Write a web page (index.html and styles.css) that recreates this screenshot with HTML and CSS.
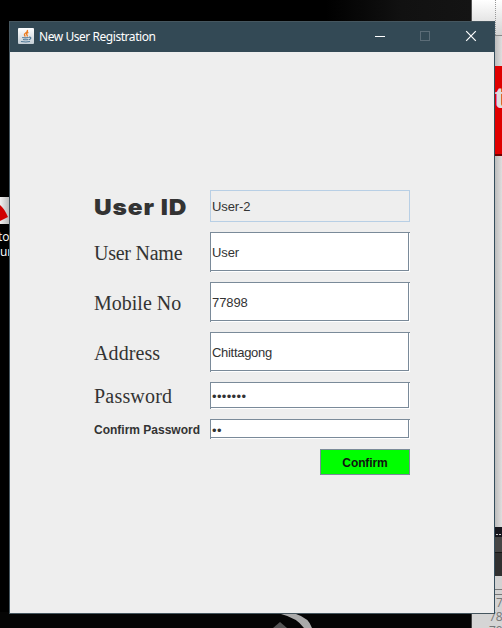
FILE: index.html
```html
<!DOCTYPE html>
<html lang="en">
<head>
<meta charset="utf-8">
<title>New User Registration</title>
<link rel="stylesheet" href="styles.css">
</head>
<body>
<div class="desktop">
  <svg class="wallpaper" width="502" height="628" aria-hidden="true">
    <defs>
      <linearGradient id="dark" x1="0" x2="1"><stop offset="0" stop-color="#000"/><stop offset=".69" stop-color="#000"/><stop offset=".85" stop-color="#111"/><stop offset="1" stop-color="#141414"/></linearGradient>
      <linearGradient id="page" x1="0" x2="0" y1="0" y2="1"><stop offset="0" stop-color="#fff"/><stop offset="1" stop-color="#d2d2d2"/></linearGradient>
      <linearGradient id="side" x1="0" x2="1"><stop offset="0" stop-color="#bcbcbc"/><stop offset="1" stop-color="#dedede"/></linearGradient>
      <linearGradient id="tile" x1="0" x2="1"><stop offset="0" stop-color="#f0f0f0"/><stop offset="1" stop-color="#bbb"/></linearGradient>
    </defs>
    <rect width="472" height="22" fill="url(#dark)"/>
    <rect y="612" width="472" height="16" fill="#050505"/>
    <path d="M281 614h15q13 4 16 14h-8q-7-10-23-14z" fill="#aaa"/>
    <path d="M273 628l7-6 7 6z" fill="#555"/>
    <rect x="471" width="1" height="22" fill="#555"/>
    <rect x="472" width="30" height="36" fill="url(#page)"/>
    <path d="M495.5 0v35" stroke="#999" stroke-dasharray="1 1"/>
    <rect x="495" y="35" width="7" height="1" fill="#888"/>
    <rect x="495" y="36" width="7" height="492" fill="url(#side)"/>
    <rect x="495" y="66" width="7" height="90" fill="#df0000"/>
    <rect x="495" y="154" width="7" height="2" fill="#720000"/>
    <rect x="495" y="527" width="7" height="10" fill="#16161d"/>
    <path d="M496 534.5h6" stroke="#ccc" stroke-dasharray="2 1"/>
    <rect x="495" y="537" width="7" height="15" fill="#454545"/>
    <rect x="495" y="552" width="7" height="1" fill="#161616"/>
    <rect x="495" y="553" width="7" height="23" fill="#303030"/>
    <rect x="495" y="576" width="7" height="52" fill="#d2d2d2"/>
    <path d="M495 589.5h7M495 594.5h7" stroke="#777"/>
    <rect x="471" y="614" width="1" height="14" fill="#444"/>
    <rect x="472" y="614" width="30" height="14" fill="#d5d5d5"/>
    <rect y="197" width="9" height="27" fill="url(#tile)"/>
    <path d="M0 205q4 3 8 12l-8 4z" fill="#d00000"/>
  </svg>
  <span class="behind shortcut-a">to</span>
  <span class="behind shortcut-b">ur</span>
  <span class="behind banner">t</span>
  <span class="behind line-a">7</span>
  <span class="behind line-b">78</span>
  <span class="behind line-c">79</span>

  <main class="window">
    <header class="titlebar">
      <svg class="java" width="16" height="16" viewBox="0 0 16 16" aria-hidden="true">
        <defs><linearGradient id="ic" x1="0" x2="0" y1="0" y2="1"><stop offset="0" stop-color="#fff"/><stop offset="1" stop-color="#c5ced5"/></linearGradient></defs>
        <rect width="16" height="16" rx="1" fill="url(#ic)"/>
        <path d="M9.300 2q.8 1.500-1.600 3-2.400 1.500-.3 3.500M10.400 4.300q-2.800 1.200-1.500 2.500.8.8 0 1.700" fill="none" stroke="#ed7d20" stroke-width="1.300"/>
        <path d="M4.200 9.500q3 .7 6.500 0M5 11.500q3 .6 5.300 0M3 13.500q5 .9 9 0M11 9.200q2.800-.3 1.400 1.700l-1.400.8" fill="none" stroke="#4f7896" stroke-width="1.100"/>
      </svg>
      <h1 class="title">New User Registration</h1>
      <svg class="controls" width="137" height="29" viewBox="0 0 137 29" aria-hidden="true">
        <path d="M18 14.500h10" stroke="#fff"/>
        <rect x="63.500" y="9.500" width="9" height="9" fill="none" stroke="#5b6c77"/>
        <path d="M109.200 9.200l9.600 9.600m0-9.600l-9.600 9.600" stroke="#fff" stroke-width="1.200"/>
      </svg>
    </header>
    <form class="form">
      <label class="label id-label">User ID</label><div class="field readonly">User-2</div>
      <label class="label name-label">User Name</label><div class="field">User</div>
      <label class="label">Mobile No</label><div class="field">77898</div>
      <label class="label address-label">Address</label><div class="field address">Chittagong</div>
      <label class="label password-label">Password</label><div class="field secret">•••••••</div>
      <label class="label small">Confirm Password</label><div class="field secret">••</div>
      <button class="confirm" type="button">Confirm</button>
    </form>
  </main>
</div>
</body>
</html>
```

FILE: styles.css
```css
* { box-sizing: border-box; }
body { margin: 0; background: #000; }
.desktop { position: relative; width: 502px; height: 628px; overflow: hidden; background: #000; }
.wallpaper { position: absolute; left: 0; top: 0; }
.behind { position: absolute; line-height: 1; white-space: nowrap; font-family: "Open Sans", sans-serif; font-size: 12px; color: #fff; }
.shortcut-a { left: -2px; top: 231px; }
.shortcut-b { left: 0; top: 246px; }
.banner { left: 494px; top: 80px; font: bold 34px/1 "Liberation Serif", serif; color: #ddd; }
.line-a, .line-b, .line-c { font-size: 12px; color: #777; }
.line-a { left: 496px; top: 597px; }
.line-b { left: 489px; top: 611px; }
.line-c { left: 489px; top: 625px; }
.window {
  position: absolute; left: 9px; top: 21px; width: 486px; height: 593px;
  border: 1px solid #45565f; border-right-color: #344d5c; background: #eee;
}
.titlebar { display: flex; align-items: center; height: 30px; padding: 0 0 1px 8px; background: #334955; }
.java { margin-top: -1px; }
.title { margin: 1px 0 0 5px; flex: 1; font: 12px/16px "Noto Sans", sans-serif; letter-spacing: -0.45px; color: #fff; white-space: nowrap; }
.controls { flex: none; }
.form {
  display: grid; grid-template-columns: 116px 200px; gap: 10px 0;
  grid-template-rows: 32px 40px 40px 40px 27px 20px 26px;
  margin: 138px 0 0 84px; color: #333;
}
.label { align-self: center; padding-top: 1px; font: 20px/24px "Liberation Serif", serif; white-space: nowrap; }
.id-label { font: 900 22px/26px Inter, sans-serif; letter-spacing: 0.8px; transform: scaleX(1.11); transform-origin: left; }
.name-label { letter-spacing: -0.25px; }
.address-label { letter-spacing: 0.1px; }
.password-label { letter-spacing: 0.2px; }
.small { padding-top: 1px; font: bold 12px/16px "Liberation Sans", sans-serif; letter-spacing: 0; }
.field {
  display: flex; align-items: center; padding: 1px 0 0 1px;
  border: 1px solid #7a8a99; background: #fff;
  border-right: 0; border-bottom: 0;
  box-shadow: inset -1px -1px #fff, inset -2px -2px #7a8a99;
  font: 13px/16px "Liberation Sans", sans-serif; letter-spacing: -0.1px;
}
.address { letter-spacing: -0.3px; }
.readonly { padding-top: 2px; border: 1px solid #b8cfe5; background: #eee; box-shadow: none; }
.secret { padding: 2px 0 0 1px; letter-spacing: 0.35px; }
.confirm {
  grid-column: 2; justify-self: end; width: 90px; padding: 1px 0 0;
  border: 1px solid #7a8a99; border-radius: 0; background: #0f0; color: #111;
  font: bold 12px/16px "Liberation Sans", sans-serif; letter-spacing: -0.1px;
}
```
